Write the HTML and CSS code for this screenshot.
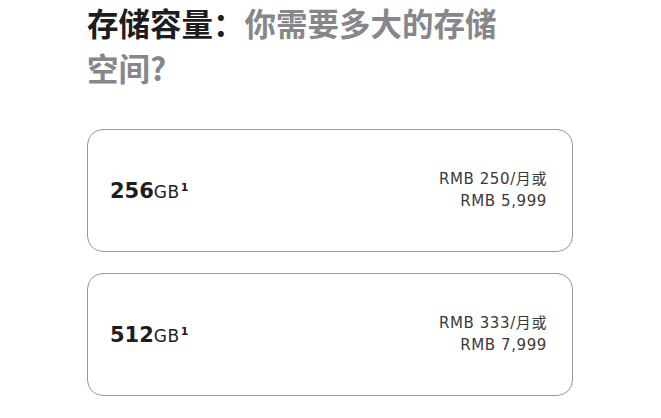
FILE: index.html
```html
<!DOCTYPE html>
<html lang="zh-CN">
<head>
<meta charset="utf-8">
<title>存储容量</title>
<link rel="stylesheet" href="styles.css">
</head>
<body>
<main class="storage">
  <h2 class="storage-title"><span class="title-strong">存储容量：</span><span class="title-muted">你需要多大的存储空间?</span></h2>
  <div class="options">
    <button class="option" type="button">
      <span class="capacity"><span class="capacity-num">256</span><span class="capacity-unit">GB</span><sup class="footnote">1</sup></span>
      <span class="price"><span class="price-line">RMB 250/月或</span><span class="price-line">RMB 5,999</span></span>
    </button>
    <button class="option" type="button">
      <span class="capacity"><span class="capacity-num">512</span><span class="capacity-unit">GB</span><sup class="footnote">1</sup></span>
      <span class="price"><span class="price-line">RMB 333/月或</span><span class="price-line">RMB 7,999</span></span>
    </button>
  </div>
</main>
</body>
</html>
```

FILE: styles.css
```css
* {
  box-sizing: border-box;
}

html,
body {
  margin: 0;
  background: #ffffff;
}

.storage {
  width: 486px;
  margin-left: 87px;
  display: flex;
  flex-direction: column;
  gap: 39px;
}

.storage-title {
  margin: 0;
  max-width: 425px;
  font-family: "Noto Sans CJK SC", "Noto Sans", sans-serif;
  font-size: 31.5px;
  line-height: 45px;
  font-weight: 700;
  color: #1d1d1f;
}

.title-muted {
  color: #86868b;
}

.options {
  display: flex;
  flex-direction: column;
  gap: 21px;
}

.option {
  display: flex;
  align-items: center;
  justify-content: space-between;
  width: 100%;
  height: 123px;
  padding: 0 25px 0 22px;
  margin: 0;
  background: #ffffff;
  border: 1px solid #98989d;
  border-radius: 16px;
  font: inherit;
  text-align: left;
  cursor: pointer;
}

.capacity {
  display: flex;
  align-items: baseline;
  color: #1d1d1f;
  font-family: "DejaVu Sans", "Noto Sans CJK SC", sans-serif;
}

.capacity-num {
  font-size: 21px;
  font-weight: 700;
}

.capacity-unit {
  font-size: 17px;
  letter-spacing: 0.5px;
}

.footnote {
  font-size: 11px;
  font-weight: 700;
  position: relative;
  top: -7px;
  margin-left: 1px;
  line-height: 1;
}

.price {
  display: flex;
  flex-direction: column;
  align-items: flex-end;
  font-family: "DejaVu Sans", "Noto Sans CJK SC", sans-serif;
  font-size: 15px;
  line-height: 21.5px;
  letter-spacing: 0.6px;
  color: #3a3a3c;
}

.price-line {
  white-space: nowrap;
}
```
